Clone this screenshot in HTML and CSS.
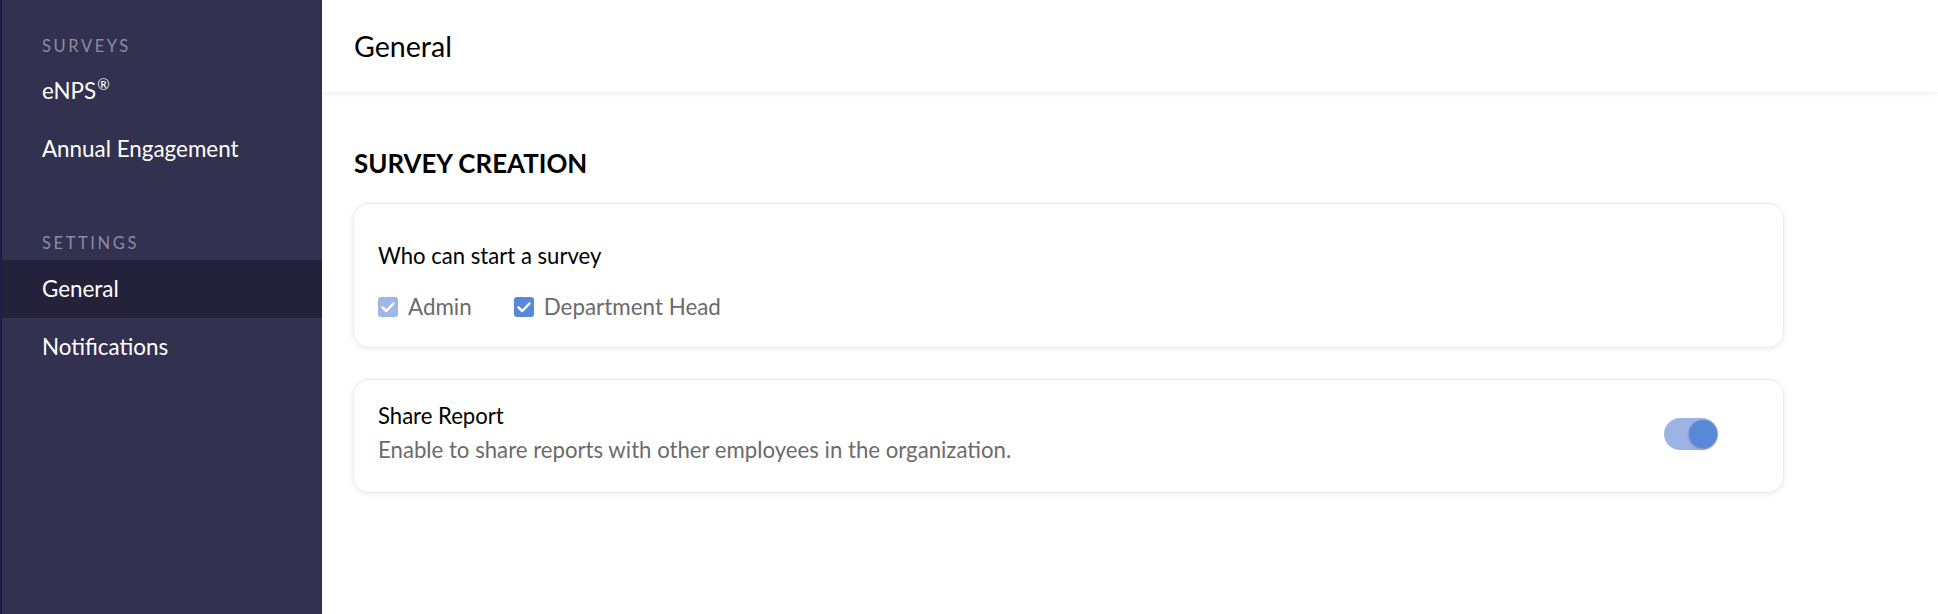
FILE: index.html
```html
<!DOCTYPE html>
<html lang="en">
<head>
<meta charset="utf-8">
<title>Settings - General</title>
<link rel="stylesheet" href="styles.css">
</head>
<body>
<div class="app">
  <aside class="sidebar">
    <div class="nav-heading first">SURVEYS</div>
    <a class="nav-item">eNPS<sup>®</sup></a>
    <a class="nav-item">Annual Engagement</a>
    <div class="nav-heading">SETTINGS</div>
    <a class="nav-item active">General</a>
    <a class="nav-item">Notifications</a>
  </aside>
  <main class="main">
    <header class="topbar">General</header>
    <section class="content">
      <h2 class="section-title">SURVEY CREATION</h2>
      <div class="card card-who">
        <div class="card-title">Who can start a survey</div>
        <div class="checks">
          <label class="check">
            <span class="box box-disabled"><svg viewBox="0 0 20 20" width="20" height="20"><path d="M4.5 10.3 L8.3 14 L15.5 6.5" fill="none" stroke="#fff" stroke-width="2.5" stroke-linecap="round" stroke-linejoin="round"/></svg></span>
            <span class="check-label">Admin</span>
          </label>
          <label class="check">
            <span class="box"><svg viewBox="0 0 20 20" width="20" height="20"><path d="M4.5 10.3 L8.3 14 L15.5 6.5" fill="none" stroke="#fff" stroke-width="2.5" stroke-linecap="round" stroke-linejoin="round"/></svg></span>
            <span class="check-label">Department Head</span>
          </label>
        </div>
      </div>
      <div class="card card-share">
        <div class="share-text">
          <div class="card-title">Share Report</div>
          <div class="card-desc">Enable to share reports with other employees in the organization.</div>
        </div>
        <div class="toggle"><span class="knob"></span></div>
      </div>
    </section>
  </main>
</div>
</body>
</html>
```
FILE: styles.css
```css
* { box-sizing: border-box; }
html, body {
  margin: 0;
  padding: 0;
  height: 100%;
  background: #ffffff;
  font-family: Lato, "Noto Sans", "Liberation Sans", sans-serif;
  overflow: hidden;
}
.app {
  display: flex;
  height: 614px;
}
.sidebar {
  width: 322px;
  flex: 0 0 322px;
  background: #32314f;
  border-left: 2px solid #1e1c4b;
  padding-top: 36px;
  display: flex;
  flex-direction: column;
}
.nav-heading {
  font-size: 16.5px;
  line-height: 20px;
  letter-spacing: 2.6px;
  color: #8c8ba5;
  padding-left: 40px;
  margin-top: 55px;
  margin-bottom: 7px;
}
.nav-heading.first {
  margin-top: 0;
  margin-bottom: 6px;
}
.nav-item {
  display: block;
  height: 58px;
  line-height: 58px;
  padding-left: 40px;
  font-size: 22.4px;
  color: #ffffff;
  text-decoration: none;
}
.nav-item sup {
  font-size: 15px;
  line-height: 0;
  vertical-align: 9px;
  margin-left: 1px;
}
.nav-item.active {
  background: #23223a;
}
.main {
  flex: 1;
  display: flex;
  flex-direction: column;
}
.topbar {
  height: 92px;
  display: flex;
  align-items: center;
  padding-left: 32px;
  font-size: 28.6px;
  color: #000;
  box-shadow: 0 2px 6px rgba(0, 0, 0, 0.07);
  position: relative;
  z-index: 1;
}
.content {
  padding: 54px 0 0 31px;
  width: 1463px;
}
.section-title {
  margin: 0 0 23px 1px;
  font-size: 25.9px;
  line-height: 34px;
  font-weight: 700;
  color: #000;
}
.card {
  width: 1431px;
  background: #fff;
  border: 1px solid #ececec;
  border-radius: 16px;
  box-shadow: 0 1px 6px rgba(0, 0, 0, 0.08);
}
.card-who {
  padding: 38px 24px 26px;
}
.card-title {
  font-size: 22.1px;
  line-height: 28px;
  color: #000;
}
.checks {
  display: flex;
  align-items: center;
  margin-top: 23px;
  gap: 42px;
}
.check {
  display: flex;
  align-items: center;
  gap: 10px;
  height: 28px;
}
.box {
  width: 20px;
  height: 20px;
  border-radius: 3px;
  background: #5a87d9;
  display: flex;
}
.box-disabled {
  background: #9db7e8;
}
.check-label {
  font-size: 22.4px;
  line-height: 28px;
  color: #6b6b6b;
}
.card-share {
  margin-top: 31px;
  padding: 22px 65px 28px 24px;
  display: flex;
  align-items: center;
  justify-content: space-between;
}
.card-desc {
  margin-top: 6px;
  font-size: 22.2px;
  line-height: 28px;
  color: #6b6b6b;
}
.toggle {
  width: 54px;
  height: 32px;
  border-radius: 16px;
  background: #9bb4e4;
  position: relative;
  margin-top: 2px;
}
.knob {
  position: absolute;
  top: 2px;
  right: 1px;
  width: 28px;
  height: 28px;
  border-radius: 50%;
  background: #5a88d9;
  box-shadow: 0 1px 3px rgba(0, 0, 0, 0.25);
}
```
